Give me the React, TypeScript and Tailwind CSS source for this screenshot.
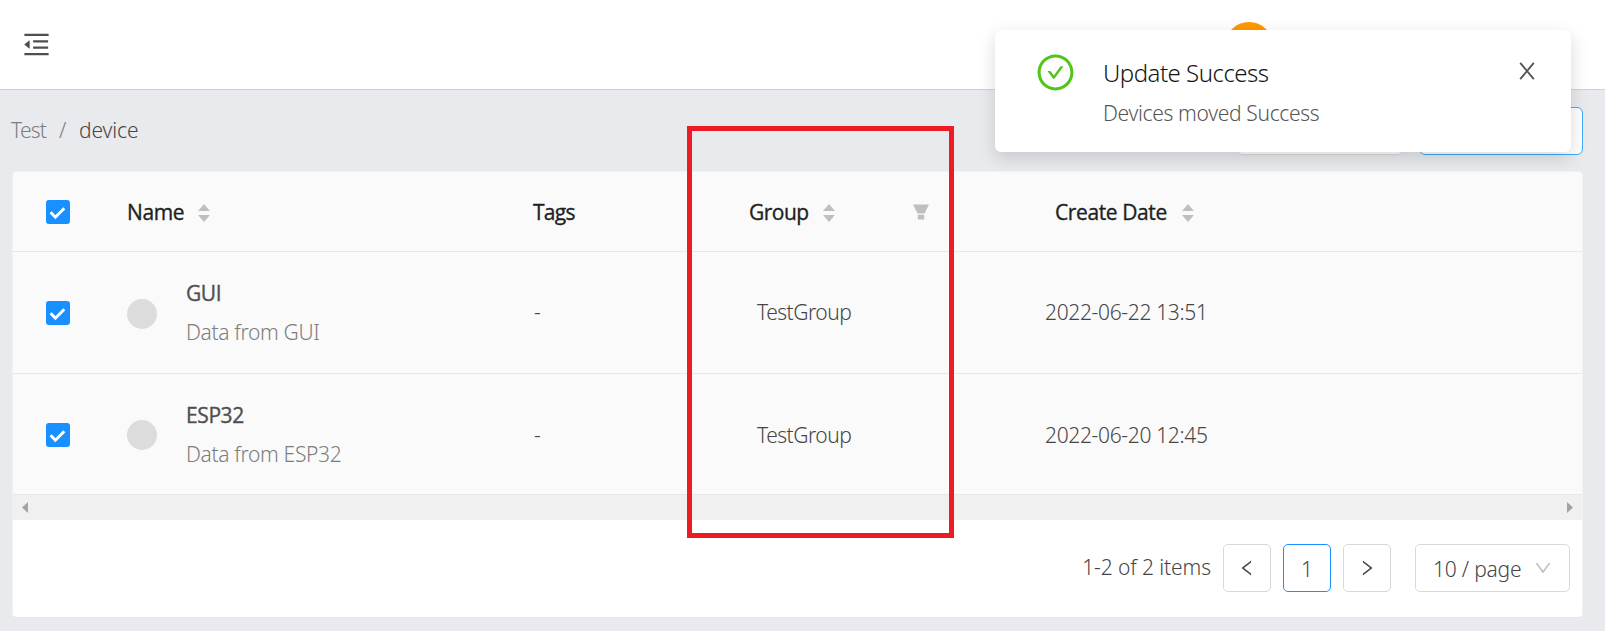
import {
  AiOutlineCheckCircle,
  AiOutlineDown,
  AiOutlineLeft,
  AiOutlineMenuFold,
  AiOutlineRight,
} from "react-icons/ai";

type Device = {
  name: string;
  description: string;
  group: string;
  created: string;
  rowClass: string;
  dotClass: string;
};

const devices: Device[] = [
  {
    name: "GUI",
    description: "Data from GUI",
    group: "TestGroup",
    created: "2022-06-22 13:51",
    rowClass: "h-[122px]",
    dotClass: "mt-[2px]",
  },
  {
    name: "ESP32",
    description: "Data from ESP32",
    group: "TestGroup",
    created: "2022-06-20 12:45",
    rowClass: "h-[121px] pt-[2px]",
    dotClass: "mt-0",
  },
];

function Checkbox() {
  return (
    <span className="block h-6 w-6 rounded-[3px] bg-[#1890ff]">
      <svg viewBox="0 0 24 24" className="h-6 w-6" fill="none" stroke="#fff" strokeWidth="3">
        <path d="M4.6 12.3 9.4 17.2 18.3 8.3" />
      </svg>
    </span>
  );
}

function Sorter() {
  return (
    <svg viewBox="0 0 12 18" className="mt-[3px] h-[18px] w-3 shrink-0" fill="#bfbfbf">
      <path d="M6 0 12 7H0zM6 18 0 11h12z" />
    </svg>
  );
}

function Funnel() {
  return (
    <svg viewBox="0 0 16 16" className="mt-px h-4 w-4" fill="#bfbfbf">
      <path d="M0 .5h16L11.5 9.5h-7zM4.8 10.8h6.4v4.7H4.8z" />
    </svg>
  );
}

function CloseIcon() {
  return (
    <svg viewBox="0 0 16 18" className="mt-8 mr-9 h-[18px] w-4 shrink-0" fill="none" stroke="#555" strokeWidth="1.9">
      <path d="M1.2 .8 14.8 17.2M14.8 .8 1.2 17.2" />
    </svg>
  );
}

function TableHeader() {
  return (
    <div className="flex h-20 items-center rounded-t-[4px] border-b border-[#e8e8e8] bg-[#fafafa] font-['Open_Sans',sans-serif] font-medium text-[#1f1f1f] [-webkit-text-stroke:0.35px]">
      <div className="w-[114px] pl-[33px]">
        <Checkbox />
      </div>
      <div className="flex w-[405px] items-center">
        <span className="w-[71px] tracking-[-0.4px]">Name</span>
        <Sorter />
      </div>
      <div className="w-[217px] pl-px tracking-[-0.7px]">Tags</div>
      <div className="flex w-[295px] items-center justify-between pr-[115px]">
        <div className="flex items-center">
          <span className="w-[74px] tracking-[-0.5px]">Group</span>
          <Sorter />
        </div>
        <Funnel />
      </div>
      <div className="flex flex-1 items-center pl-[11px]">
        <span className="w-[127px] tracking-[-0.4px]">Create Date</span>
        <Sorter />
      </div>
    </div>
  );
}

function DeviceRow({ device }: { device: Device }) {
  return (
    <div className={`flex items-center border-b border-[#e8e8e8] bg-[#fafafa] text-[#454545] ${device.rowClass}`}>
      <div className="w-[114px] pl-[33px]">
        <Checkbox />
      </div>
      <div className="flex w-[405px] items-center">
        <span className={`h-[30px] w-[30px] rounded-full bg-[#dcdcdc] ${device.dotClass}`} />
        <div className="pl-[29px] leading-[39px]">
          <div className="font-['Open_Sans',sans-serif] font-medium tracking-[-0.4px] text-[#4f4f4f] [-webkit-text-stroke:0.35px]">
            {device.name}
          </div>
          <div className="tracking-[-0.34px] text-[#7d7d7d]">{device.description}</div>
        </div>
      </div>
      <div className="w-[216px] pb-px pl-[2px]">-</div>
      <div className="w-[296px] pb-px pl-[9px] tracking-[-0.5px]">{device.group}</div>
      <div className="flex-1 pb-px pl-px tracking-[-0.34px]">{device.created}</div>
    </div>
  );
}

function ScrollTrack() {
  return (
    <div className="flex h-[25px] items-center justify-between bg-[#f0f0f0] px-[9px]">
      <svg viewBox="0 0 6 11" className="h-[11px] w-1.5" fill="#a3a3a3">
        <path d="M6 0v11L0 5.5z" />
      </svg>
      <svg viewBox="0 0 6 11" className="h-[11px] w-1.5" fill="#a3a3a3">
        <path d="M0 0v11l6-5.5z" />
      </svg>
    </div>
  );
}

function Pagination() {
  return (
    <div className="flex items-start justify-end pt-6 pr-3 text-[#454545]">
      <span className="mr-3 leading-[47px] tracking-[-0.1px]">1-2 of 2 items</span>
      <button className="flex h-12 w-12 items-center justify-center rounded-[5px] border border-[#d9d9d9] text-[20px]">
        <AiOutlineLeft />
      </button>
      <button className="ml-3 flex h-12 w-12 items-center justify-center rounded-[5px] border border-[#1890ff] pt-px">1</button>
      <button className="ml-3 flex h-12 w-12 items-center justify-center rounded-[5px] border border-[#d9d9d9] text-[20px]">
        <AiOutlineRight />
      </button>
      <button className="ml-6 flex h-12 w-[155px] items-center justify-between rounded-[5px] border border-[#d9d9d9] pr-[16px] pl-[17px]">
        <span className="pt-[2px] tracking-[-0.2px]">10 / page</span>
        <AiOutlineDown className="text-[20px] text-[#bfbfbf]" />
      </button>
    </div>
  );
}

function Toast() {
  return (
    <div className="absolute top-[30px] left-[995px] flex h-[122px] w-[576px] rounded-[6px] bg-white shadow-[0_6px_18px_rgba(0,0,0,0.15)]">
      <AiOutlineCheckCircle className="mt-[21.5px] ml-[39.5px] shrink-0 text-[41px] text-[#52c41a]" />
      <div className="ml-[27.5px] flex-1 pt-[25px]">
        <div className="text-[24px] leading-9 tracking-[-0.5px] text-[#141414]">Update Success</div>
        <div className="pt-1 leading-[36px] tracking-[-0.33px] text-[#555]">Devices moved Success</div>
      </div>
      <CloseIcon />
    </div>
  );
}

export default function App() {
  return (
    <div className="relative flex h-[631px] w-[1605px] flex-col overflow-hidden bg-[#e9eaee] font-['Noto_Sans',sans-serif] text-[21px] leading-[34px] font-light">
      <header className="flex h-[90px] shrink-0 items-center justify-between border-b border-[#cfd0d4] bg-white pr-[332px] pl-[21px]">
        <AiOutlineMenuFold className="text-[31px] text-[#4f4f4f]" />
        <span className="mt-[3px] h-12 w-12 rounded-full bg-[#ff9800]" />
      </header>

      <div className="flex h-[81px] shrink-0 items-center justify-between pr-[22px] pl-[11px]">
        <nav className="flex pb-px text-[#7d7d7d]">
          <span className="w-[48px] tracking-[-0.8px]">Test</span>
          <span className="w-[20px]">/</span>
          <span className="tracking-[-0.1px] text-[#454545]">device</span>
        </nav>
        <div className="flex gap-4">
          <span className="h-12 w-[166px] rounded-[6px] border border-[#d9d9d9] bg-white" />
          <span className="h-12 w-[164px] rounded-[6px] border border-[#40a9ff] bg-white" />
        </div>
      </div>

      <main className="ml-3 h-[447px] w-[1571px] shrink-0 rounded-[5px] border border-[#f2f2f3] border-b-[#e6e6e8] bg-white">
        <TableHeader />
        {devices.map((device) => (
          <DeviceRow key={device.name} device={device} />
        ))}
        <ScrollTrack />
        <Pagination />
      </main>

      <Toast />
      <div className="absolute top-[126px] left-[687px] h-[412px] w-[267px] border-[5px] border-[#ed1c24]" />
    </div>
  );
}
